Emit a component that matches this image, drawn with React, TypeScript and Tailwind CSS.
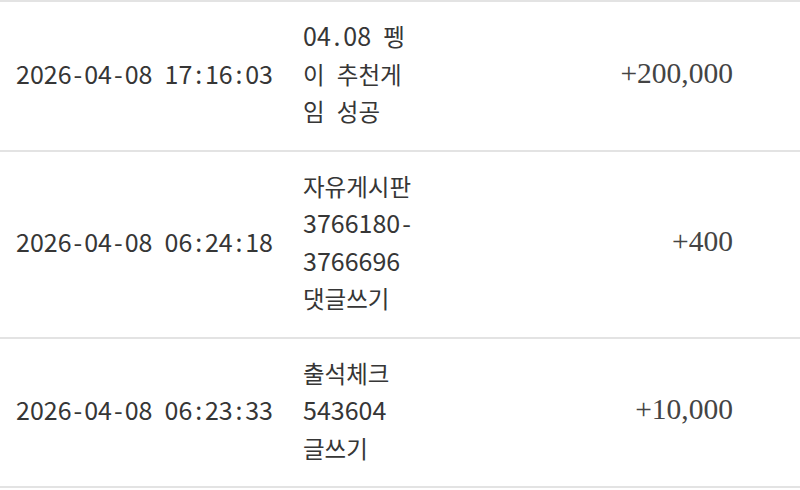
const rows = [
  { date: '2026-04-08 17:16:03', memo: ['04.08 펭', '이 추천게', '임 성공'], amount: '+200,000' },
  { date: '2026-04-08 06:24:18', memo: ['자유게시판', '3766180-', '3766696', '댓글쓰기'], amount: '+400' },
  { date: '2026-04-08 06:23:33', memo: ['출석체크', '543604', '글쓰기'], amount: '+10,000' },
];

const sans = { fontFamily: '"Noto Sans CJK KR", "Noto Sans", sans-serif' };

// latin runs are drawn a bit larger than hangul, punctuation nearly as wide as a digit
function Spaced({ text }: { text: string }) {
  return (
    <>
      {text.split(/([\uAC00-\uD7A3]+|[-:.])/).map((part, i) =>
        part === '' ? null : /[\uAC00-\uD7A3]/.test(part) ? (
          <span key={i} className="text-[23.5px] leading-none">{part}</span>
        ) : part === '-' ? (
          <span key={i} className="px-[2px] leading-none">-</span>
        ) : part === ':' || part === '.' ? (
          <span key={i} className="px-[2.8px] leading-none">{part}</span>
        ) : (
          <span key={i} className="leading-none">{part}</span>
        )
      )}
    </>
  );
}

export default function App() {
  return (
    <div className="w-[800px] h-[490px] bg-white overflow-hidden text-[#363636]">
      <div className="border-t-2 border-[#e3e3e3]">
        {rows.map((r) => (
          <div
            key={r.date}
            className="grid grid-cols-[287px_148px_1fr] items-center border-b-2 border-[#e3e3e3] pt-[15px] pb-[20px]"
          >
            <div className="pl-4 text-[25px] leading-[37.5px] [word-spacing:6.6px] whitespace-nowrap" style={sans}>
              <Spaced text={r.date} />
            </div>
            <div className="pl-4 pr-3 text-[25px] leading-[37.5px] [word-spacing:6.6px]" style={sans}>
              {r.memo.map((line) => (
                <div key={line} className="h-[37.5px] whitespace-nowrap">
                  <Spaced text={line} />
                </div>
              ))}
            </div>
            <div className="pr-[67px] text-right text-[29.5px] leading-[37.5px] text-[#444] font-['Liberation_Serif',serif]">
              {r.amount}
            </div>
          </div>
        ))}
      </div>
    </div>
  );
}
